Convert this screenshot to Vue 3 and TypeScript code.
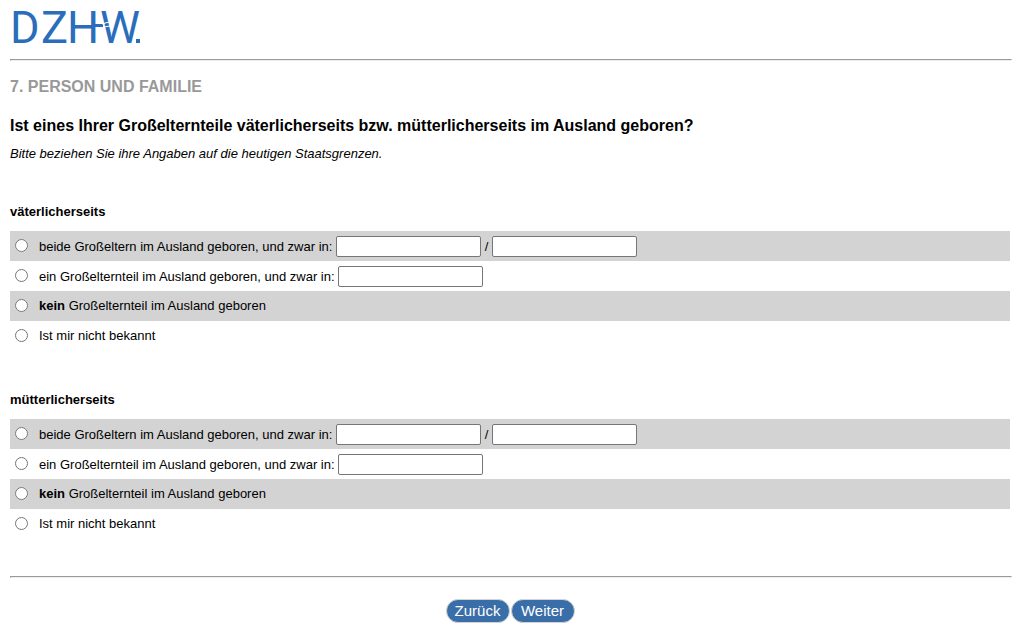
<script setup lang="ts">
import { reactive } from 'vue'

interface Option {
  value: string
  strong?: string
  text: string
  fields: number
}

const options: Option[] = [
  { value: 'both', text: 'beide Großeltern im Ausland geboren, und zwar in:', fields: 2 },
  { value: 'one', text: 'ein Großelternteil im Ausland geboren, und zwar in:', fields: 1 },
  { value: 'none', strong: 'kein', text: ' Großelternteil im Ausland geboren', fields: 0 },
  { value: 'unknown', text: 'Ist mir nicht bekannt', fields: 0 },
]

const groups = reactive([
  { id: 'paternal', title: 'väterlicherseits', answer: '', countries: { both: ['', ''], one: [''] } as Record<string, string[]> },
  { id: 'maternal', title: 'mütterlicherseits', answer: '', countries: { both: ['', ''], one: [''] } as Record<string, string[]> },
])
</script>

<template>
  <div class="page">
    <header>
      <svg class="logo" width="140" height="42" viewBox="0 0 140 42" role="img" aria-label="DZHW">
        <text class="wordmark" x="0 31 57 90" y="35">DZHW</text>
        <rect x="82" y="16" width="11" height="3" fill="#2a6ebb" />
        <path d="M92 16 L99 14 M94 19 L100 18" stroke="#fff" stroke-width="1" />
        <rect x="126" y="31" width="4" height="4" fill="#2a6ebb" />
      </svg>
    </header>
    <hr />
    <form @submit.prevent>
      <h1>7. PERSON UND FAMILIE</h1>
      <h2>Ist eines Ihrer Großelternteile väterlicherseits bzw. mütterlicherseits im Ausland geboren?</h2>
      <p class="hint">Bitte beziehen Sie ihre Angaben auf die heutigen Staatsgrenzen.</p>
      <fieldset v-for="g in groups" :key="g.id">
        <legend>{{ g.title }}</legend>
        <div v-for="o in options" :key="o.value" class="row">
          <input :id="g.id + o.value" v-model="g.answer" type="radio" :name="g.id" :value="o.value" />
          <div class="answer">
            <label :for="g.id + o.value"><b v-if="o.strong">{{ o.strong }}</b>{{ o.text }}</label>
            <template v-for="n in o.fields" :key="n">
              {{ n > 1 ? ' / ' : ' ' }}<input v-model="g.countries[o.value][n - 1]" class="country" type="text" :aria-label="`${g.title}, Land ${n}`" />
            </template>
          </div>
        </div>
      </fieldset>
      <hr />
      <div class="buttons">
        <button type="button">Zurück</button>
        <button type="submit">Weiter</button>
      </div>
    </form>
  </div>
</template>

<style>
body {
  margin: 0;
  background: #fff;
}
</style>

<style scoped>
.page {
  padding: 8px 9px 8px 10px;
  font: 13px/16px "Liberation Sans", Arial, sans-serif;
  color: #000;
}
.logo {
  display: block;
  overflow: visible;
}
.wordmark {
  font: 45px Roboto, sans-serif;
  fill: #2a6ebb;
}
hr {
  height: 0;
  margin: 9px 0 0;
  border: 1px solid;
  border-color: #9a9a9a #eee #eee #9a9a9a;
}
h1,
h2 {
  margin: 0;
  font-size: 16px;
  line-height: 20px;
}
h1 {
  margin-top: 16px;
  color: #999;
}
h2 {
  margin-top: 19px;
}
.hint {
  margin: 10px 0 42px;
  font-style: italic;
}
fieldset {
  min-width: 0;
  margin: 0 2px 41px 0;
  padding: 0;
  border: 0;
}
legend {
  padding: 0;
  margin-bottom: 11px;
  font-weight: bold;
}
fieldset + hr {
  margin-top: -4px;
}
.row {
  display: flex;
  align-items: center;
  height: 30px;
}
.row:nth-of-type(odd) {
  background: #d3d3d3;
}
.row > input {
  flex: none;
  width: 13px;
  height: 13px;
  margin: 0 11px 2px 5px;
}
.answer label {
  white-space: pre-wrap;
}
.country {
  box-sizing: border-box;
  width: 145px;
  height: 21px;
  padding: 1px 2px;
  border: 1px solid #767676;
  border-radius: 2px;
  font: inherit;
}
.buttons {
  display: flex;
  justify-content: center;
  gap: 1px;
  margin: 21px 2px 0 0;
}
button {
  width: 64px;
  height: 24px;
  padding: 0;
  border: 1px solid #d3d3d3;
  border-radius: 12px;
  background: #3a6ea8;
  color: #fff;
  font: 15px/20px "Liberation Sans", Arial, sans-serif;
}
</style>
